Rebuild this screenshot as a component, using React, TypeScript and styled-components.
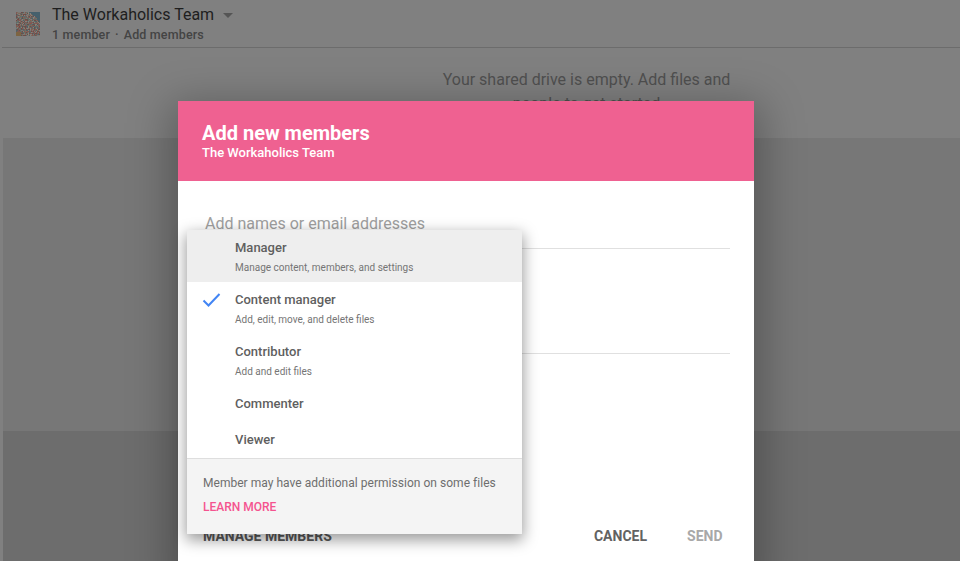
import React from "react";
import styled, { createGlobalStyle } from "styled-components";

const GlobalStyle = createGlobalStyle`
  html, body {
    margin: 0;
    padding: 0;
    background: #808080;
    font-family: Roboto, "Liberation Sans", sans-serif;
  }
`;

const Page = styled.div`
  position: relative;
  width: 960px;
  height: 561px;
  overflow: hidden;
  background: #808080;
  display: flex;
  flex-direction: column;
`;

const TopBar = styled.header`
  height: 47px;
  margin-left: 2px;
  border-bottom: 1px solid #6c6c6c;
  display: flex;
  align-items: flex-start;
  padding-left: 14px;
  gap: 12px;
`;

const Avatar = styled.svg`
  width: 24px;
  height: 24px;
  margin-top: 12px;
  flex: none;
`;

const TeamBlock = styled.div`
  padding-top: 5px;
`;

const TeamName = styled.div`
  display: flex;
  align-items: center;
  font-size: 16px;
  line-height: 19px;
  color: #1e1e1e;
  gap: 9px;
`;

const Caret = styled.span`
  width: 0;
  height: 0;
  margin-top: 1px;
  border-left: 5px solid transparent;
  border-right: 5px solid transparent;
  border-top: 5px solid #555;
`;

const TeamMeta = styled.div`
  margin-top: 3px;
  font-size: 12.5px;
  font-weight: 500;
  letter-spacing: 0.15px;
  line-height: 15px;
  color: #444;
  white-space: pre;
`;

const MetaDot = styled.span`
  margin: 0 5px 0 5px;
`;

const EmptyArea = styled.div`
  height: 90px;
  padding-left: 432px;
  box-sizing: border-box;
`;

const EmptyText = styled.p`
  margin: 20px 0 0;
  width: 309px;
  text-align: center;
  font-size: 16px;
  line-height: 24px;
  color: #505050;
`;

const Band = styled.div<{ $tone: string; $h: number }>`
  height: ${(p) => p.$h}px;
  margin-left: 3px;
  background: ${(p) => p.$tone};
  flex: none;
`;

const Modal = styled.section`
  position: absolute;
  left: 178px;
  top: 101px;
  width: 576px;
  height: 480px;
  background: #fff;
  box-shadow: 0 10px 40px 8px rgba(0, 0, 0, 0.28);
`;

const ModalHeader = styled.div`
  height: 80px;
  box-sizing: border-box;
  background: #ef6191;
  color: #fff;
  padding: 20px 24px 0;
`;

const ModalTitle = styled.h2`
  margin: 0;
  font-size: 20px;
  line-height: 24px;
  font-weight: 700;
`;

const ModalSub = styled.div`
  font-size: 13px;
  line-height: 15px;
  font-weight: 500;
`;

const Field = styled.div<{ $h: number }>`
  height: ${(p) => p.$h}px;
  margin: 0 24px 0 27px;
  box-sizing: border-box;
  border-bottom: 1px solid #e0e0e0;
  font-size: 16px;
  line-height: 19px;
  color: #a0a0a0;
  padding-top: 33px;
`;

const ModalFooter = styled.div`
  position: absolute;
  left: 25px;
  right: 31.5px;
  top: 427px;
  display: flex;
  align-items: center;
  font-size: 14px;
  line-height: 16px;
  font-weight: 700;
`;

const ManageLink = styled.span`
  color: #5a5a5a;
  flex: 1;
`;

const FooterButton = styled.span<{ $off?: boolean }>`
  color: ${(p) => (p.$off ? "#a8a8a8" : "#626262")};
  margin-left: 40px;
`;

const Menu = styled.div`
  position: absolute;
  left: 187px;
  top: 230px;
  width: 335px;
  background: #fff;
  box-shadow: 0 5px 14px 1px rgba(0, 0, 0, 0.4);
`;

const MenuRow = styled.div<{ $active?: boolean; $tall?: boolean }>`
  position: relative;
  height: ${(p) => (p.$tall ? 52 : 36)}px;
  box-sizing: border-box;
  padding: 10px 0 0 48px;
  background: ${(p) => (p.$active ? "#eeeeee" : "#fff")};
`;

const RowTitle = styled.div`
  font-size: 13px;
  line-height: 15px;
  font-weight: 500;
  color: #5f5f5f;
`;

const RowDesc = styled.div`
  margin-top: 6px;
  font-size: 10px;
  line-height: 13px;
  color: #757575;
`;

const Check = styled.svg`
  position: absolute;
  left: 15px;
  top: 10px;
  width: 19px;
  height: 16px;
`;

const MenuNote = styled.div`
  height: 76px;
  box-sizing: border-box;
  border-top: 1px solid #dedede;
  background: #f4f4f4;
  padding: 17px 16px 0;
`;

const NoteText = styled.div`
  font-size: 12px;
  letter-spacing: 0.03px;
  line-height: 14px;
  color: #6e6e6e;
`;

const LearnMore = styled.div`
  margin-top: 10px;
  font-size: 12px;
  line-height: 14px;
  font-weight: 500;
  color: #f4538f;
`;

const ROLES = [
  { title: "Manager", desc: "Manage content, members, and settings", active: true },
  { title: "Content manager", desc: "Add, edit, move, and delete files", checked: true },
  { title: "Contributor", desc: "Add and edit files" },
  { title: "Commenter" },
  { title: "Viewer" },
];

const SPECKS = ["#7c5a56", "#5e6b6c", "#7d7973", "#86574f", "#536366", "#87827a", "#64504d", "#724b47", "#637068", "#7f6a5c"];

// little noise mosaic standing in for the team photo
const AvatarArt = () => {
  const cells = [];
  let seed = 17;
  for (let y = 0; y < 24; y++) {
    for (let x = 0; x < 24; x++) {
      seed = (seed * 137 + 59) % 1009;
      const inPhoto = x * x + (y - 24) * (y - 24) < 27 * 27;
      const warmCorner = x < 5 && y > 19;
      const color = !inPhoto ? "#46606c" : warmCorner ? "#7d6442" : SPECKS[seed % SPECKS.length];
      cells.push(<rect key={`${x}-${y}`} x={x} y={y} width="1" height="1" fill={color} />);
    }
  }
  return (
    <Avatar viewBox="0 0 24 24" shapeRendering="crispEdges">
      {cells}
    </Avatar>
  );
};

export default function App() {
  return (
    <Page>
      <GlobalStyle />
      <TopBar>
        <AvatarArt />
        <TeamBlock>
          <TeamName>
            The Workaholics Team
            <Caret />
          </TeamName>
          <TeamMeta>
            1 member<MetaDot>·</MetaDot>Add members
          </TeamMeta>
        </TeamBlock>
      </TopBar>
      <EmptyArea>
        <EmptyText>Your shared drive is empty. Add files and people to get started</EmptyText>
      </EmptyArea>
      <Band $tone="#777777" $h={293} />
      <Band $tone="#6d6d6d" $h={130} />

      <Modal>
        <ModalHeader>
          <ModalTitle>Add new members</ModalTitle>
          <ModalSub>The Workaholics Team</ModalSub>
        </ModalHeader>
        <Field $h={68}>Add names or email addresses</Field>
        <Field $h={105} />
        <ModalFooter>
          <ManageLink>MANAGE MEMBERS</ManageLink>
          <FooterButton>CANCEL</FooterButton>
          <FooterButton $off>SEND</FooterButton>
        </ModalFooter>
      </Modal>

      <Menu>
        {ROLES.map((r) => (
          <MenuRow key={r.title} $active={r.active} $tall={!!r.desc}>
            {r.checked && (
              <Check viewBox="0 0 19 16">
                <path d="M1.5 8.5 L6.5 13.5 L17.5 2" fill="none" stroke="#4285f4" strokeWidth="2" />
              </Check>
            )}
            <RowTitle>{r.title}</RowTitle>
            {r.desc && <RowDesc>{r.desc}</RowDesc>}
          </MenuRow>
        ))}
        <MenuNote>
          <NoteText>Member may have additional permission on some files</NoteText>
          <LearnMore>LEARN MORE</LearnMore>
        </MenuNote>
      </Menu>
    </Page>
  );
}
